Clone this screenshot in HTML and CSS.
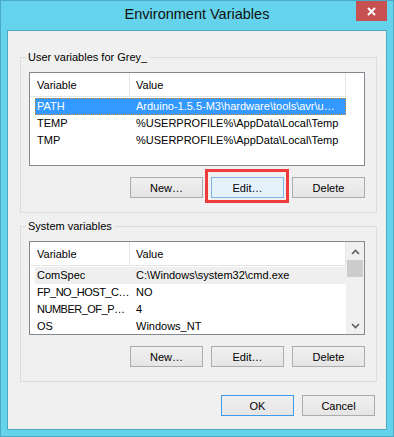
FILE: index.html
```html
<!DOCTYPE html>
<html lang="en">
<head>
  <meta charset="UTF-8" />
  <title>Environment Variables</title>
  <link rel="stylesheet" href="styles.css">
</head>
<body>
  <div class="window">
    <div class="titlebar">
      <h1 class="title">Environment Variables</h1>
      <button class="close" aria-label="Close">
        <svg width="9" height="9" viewBox="0 0 9 9"><path d="M1 1 L8 8 M8 1 L1 8" stroke="#fff" stroke-width="2" fill="none"/></svg>
      </button>
    </div>

    <div class="client">
      <!-- user variables -->
      <fieldset class="group">
        <legend>User variables for Grey_</legend>
        <div class="list">
          <div class="list-main">
            <div class="list-head">
              <span class="hcol hcol-name">Variable</span>
              <span class="hcol hcol-value">Value</span>
            </div>
            <div class="rows">
              <div class="row selected"><span class="cell-name">PATH</span><span class="cell-value">Arduino-1.5.5-M3\hardware\tools\avr\u…</span></div>
              <div class="row"><span class="cell-name">TEMP</span><span class="cell-value">%USERPROFILE%\AppData\Local\Temp</span></div>
              <div class="row"><span class="cell-name">TMP</span><span class="cell-value">%USERPROFILE%\AppData\Local\Temp</span></div>
            </div>
          </div>
        </div>
        <div class="btn-row">
          <button class="btn">New…</button>
          <span class="annotated">
            <button class="btn btn-hot">Edit…</button>
            <span class="callout"></span>
          </span>
          <button class="btn">Delete</button>
        </div>
      </fieldset>

      <!-- system variables -->
      <fieldset class="group">
        <legend>System variables</legend>
        <div class="list">
          <div class="list-main">
            <div class="list-head">
              <span class="hcol hcol-name">Variable</span>
              <span class="hcol hcol-value">Value</span>
            </div>
            <div class="rows">
              <div class="row current"><span class="cell-name">ComSpec</span><span class="cell-value">C:\Windows\system32\cmd.exe</span></div>
              <div class="row"><span class="cell-name tight">FP_NO_HOST_C…</span><span class="cell-value">NO</span></div>
              <div class="row"><span class="cell-name tight">NUMBER_OF_P…</span><span class="cell-value">4</span></div>
              <div class="row"><span class="cell-name">OS</span><span class="cell-value">Windows_NT</span></div>
            </div>
          </div>
          <div class="scrollbar">
            <span class="sb-arrow sb-up">
              <svg width="9" height="6" viewBox="0 0 9 6"><polyline points="1,5 4.5,1.5 8,5" stroke="#606060" stroke-width="1.6" fill="none"/></svg>
            </span>
            <span class="sb-thumb"></span>
            <span class="sb-track"></span>
            <span class="sb-arrow sb-down">
              <svg width="9" height="6" viewBox="0 0 9 6"><polyline points="1,1 4.5,4.5 8,1" stroke="#606060" stroke-width="1.6" fill="none"/></svg>
            </span>
          </div>
        </div>
        <div class="btn-row">
          <button class="btn">New…</button>
          <button class="btn">Edit…</button>
          <button class="btn">Delete</button>
        </div>
      </fieldset>

      <div class="dialog-buttons">
        <button class="btn btn-default">OK</button>
        <button class="btn">Cancel</button>
      </div>
    </div>
  </div>
</body>
</html>
```

FILE: styles.css
```css
* {
  box-sizing: border-box;
}

body {
  margin: 0;
  font-family: "Liberation Sans", Arial, sans-serif;
  font-size: 11px;
  color: #000;
  background: #fff;
}

/* window frame */
.window {
  width: 394px;
  height: 437px;
  border: 1px solid #4aa9c4;
  background: #65d3eb;
  padding: 0 6px 6px;
  display: flex;
  flex-direction: column;
}

.titlebar {
  height: 29px;
  display: grid;
  grid-template-columns: 1fr auto 1fr;
  align-items: start;
}

.title {
  grid-column: 2;
  margin: 0;
  font-size: 14.5px;
  font-weight: normal;
  line-height: 27px;
  color: #111;
}

.close {
  grid-column: 3;
  justify-self: end;
  width: 31px;
  height: 20px;
  margin: 0;
  padding: 0;
  border: none;
  background: #c75050;
  display: flex;
  align-items: center;
  justify-content: center;
}

.client {
  height: 400px;
  border: 1px solid #4ea8c0;
  background: #f0f0f0;
  display: flex;
  flex-direction: column;
}

/* group boxes */
.group {
  margin: 19px 9px 0 12px;
  padding: 8px 11px 14px 8px;
  border: 1px solid #dcdcdc;
  min-width: 0;
}

.group + .group {
  margin-top: 6px;
}

.group legend {
  padding: 0 2px;
  margin-left: -3px;
  line-height: 14px;
}

/* list views */
.list {
  height: 94px;
  border: 1px solid #828790;
  background: #fff;
  display: flex;
}

.list-main {
  flex: 1;
  min-width: 0;
  overflow: hidden;
}

.list-head {
  display: flex;
  height: 24px;
}

.hcol {
  height: 24px;
  padding-top: 2px;
  line-height: 21px;
  border-right: 1px solid #e5e5e5;
  border-bottom: 1px solid #e5e5e5;
}

.hcol-name {
  width: 100px;
  padding-left: 7px;
}

.hcol-value {
  width: 216px;
  padding-left: 6px;
}

.rows {
  padding-top: 1px;
}

.row {
  display: flex;
  width: 311px;
  margin-left: 5px;
  height: 17px;
  line-height: 17px;
  white-space: nowrap;
}

.cell-name {
  width: 95px;
  padding-left: 2px;
  overflow: hidden;
}

.cell-name.tight {
  letter-spacing: -0.5px;
  overflow: visible;
}

.cell-value {
  flex: 1;
  min-width: 0;
  padding-left: 6px;
  overflow: hidden;
  text-overflow: ellipsis;
}

.row.selected {
  background: #3399ff;
  color: #fff;
  outline: 1px dotted #d88a3a;
  outline-offset: -1px;
}

.row.current {
  background: #efefef;
}

/* scrollbar */
.scrollbar {
  width: 18px;
  background: #f0f0f0;
  display: flex;
  flex-direction: column;
}

.sb-arrow {
  display: flex;
  align-items: center;
  justify-content: center;
  height: 17px;
}

.sb-up {
  height: 18px;
  padding-top: 2px;
}

.sb-thumb {
  height: 17px;
  width: 16px;
  margin-left: 1px;
  background: #cdcdcd;
}

.sb-track {
  flex: 1;
}

/* buttons */
.btn-row {
  display: flex;
  justify-content: flex-end;
  gap: 8px;
  margin-top: 11px;
}

.btn {
  width: 73px;
  height: 21px;
  margin: 0;
  padding: 0;
  border: 1px solid #acacac;
  background: linear-gradient(#f0f0f0, #e5e5e5);
  font: inherit;
  color: #000;
}

.btn-hot {
  background: #e5f1fb;
  border-color: #7eb4ea;
}

.btn-default {
  border-color: #3c9ae6;
}

.annotated {
  position: relative;
  display: flex;
}

.callout {
  position: absolute;
  top: -8px;
  left: -6px;
  right: -5px;
  bottom: -5px;
  border: 3px solid #ef3b3b;
  pointer-events: none;
}

.dialog-buttons {
  display: flex;
  justify-content: flex-end;
  gap: 8px;
  margin-top: 13px;
  padding-right: 11px;
}
```
